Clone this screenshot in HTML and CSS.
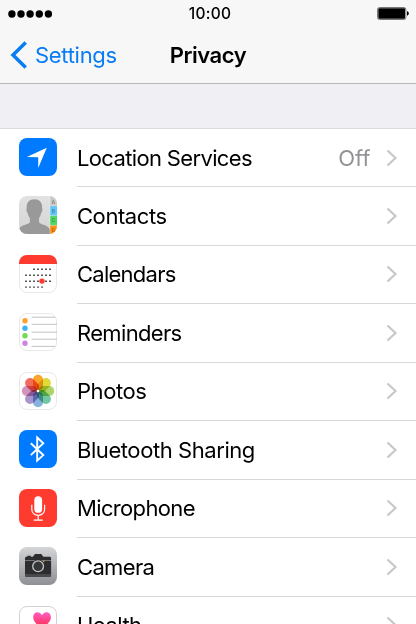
FILE: index.html
```html
<!DOCTYPE html>
<html lang="en">
<head>
  <meta charset="utf-8">
  <title>Privacy</title>
  <link rel="stylesheet" href="styles.css">
</head>
<body>
  <header class="header">
    <div class="status-bar">
      <svg class="signal" viewBox="0 0 44 8">
        <circle cx="3.9" cy="4" r="3.7"/>
        <circle cx="13" cy="4" r="3.7"/>
        <circle cx="22.1" cy="4" r="3.7"/>
        <circle cx="31.3" cy="4" r="3.7"/>
        <circle cx="40.4" cy="4" r="3.7"/>
      </svg>
      <span class="time">10:00</span>
      <svg class="battery" viewBox="0 0 32 13">
        <rect x=".5" y=".5" width="28.4" height="12" rx="2" fill="#fff" stroke="#777"/>
        <rect x="1.3" y="1.3" width="26.8" height="10.4" rx="1"/>
        <path d="M30 4.3c2.4.6 2.4 3.8 0 4.4z"/>
      </svg>
    </div>
    <nav class="nav-bar">
      <a class="back">
        <svg class="back-arrow" viewBox="0 0 18 28"><path d="M15.7 1.5 3 14l12.7 12.5"/></svg>
        <span>Settings</span>
      </a>
      <h1 class="title">Privacy</h1>
    </nav>
  </header>

  <main class="list">
    <div class="row">
      <svg class="icon" viewBox="0 0 38 38">
        <rect width="38" height="38" rx="8" fill="#007aff"/>
        <path d="M27.8 9.8 19.2 30v-10.8L7.800 19z" fill="#fff"/>
      </svg>
      <div class="cell">
        <span class="label location">Location Services</span>
        <span class="value">Off</span>
        <svg class="chevron" viewBox="0 0 12 18"><path d="m1.5 1.5 8 7.5-8 7.5"/></svg>
      </div>
    </div>

    <div class="row">
      <svg class="icon" viewBox="0 0 38 38">
        <defs>
          <clipPath id="round"><rect width="38" height="38" rx="8"/></clipPath>
          <linearGradient id="paper" x2="0" y2="1"><stop stop-color="#e2e2e2"/><stop offset="1" stop-color="#d4d4d4"/></linearGradient>
        </defs>
        <g clip-path="url(#round)">
          <rect width="38" height="38" fill="url(#paper)"/>
          <path d="M15.4 3.2c5 0 8 3.2 7.7 8.2 0 1 .4 1.5.2 3-.2 1.4-.8 1.9-1.2 2.500-.3 2.600-1.300 4-2.100 5.100v4.200c1.200 2.600 9.200 2.600 11 7.300V38H0v-5c1.800-4.300 9.800-4.500 10.900-6.800V22c-.9-1.100-1.900-2.600-2.200-5.100-.5-.6-1-1.200-1.200-2.500-.2-1.400.2-2 .2-3-.2-5 2.700-8.200 7.700-8.200z" fill="#999"/>
          <rect x="31" width="7" height="10" fill="#c9c9c3"/>
          <rect x="31" y="10" width="7" height="9.7" fill="#5fc6fa"/>
          <rect x="31" y="19.7" width="7" height="9.7" fill="#4dd765"/>
          <rect x="31" y="29.4" width="7" height="9" fill="#ff9212"/>
          <path d="M31 9.8h7M31 19.6h7M31 29.3h7M31 0v38" stroke="#fff" stroke-opacity=".5" stroke-width=".6"/>
          <g class="tab-letters">
            <text x="34.3" y="8">A</text>
            <text x="34.3" y="16.8">B</text>
            <text x="34.3" y="26.4">C</text>
            <text x="34.3" y="35.5">D</text>
          </g>
        </g>
      </svg>
      <div class="cell">
        <span class="label contacts">Contacts</span>
        <svg class="chevron" viewBox="0 0 12 18"><path d="m1.5 1.5 8 7.5-8 7.5"/></svg>
      </div>
    </div>

    <div class="row">
      <svg class="icon" viewBox="0 0 38 38">
        <rect x=".5" y=".5" width="37" height="37" rx="7.5" fill="#fff" stroke="#e8e8e8"/>
        <path d="M0 9V8a8 8 0 0 1 8-8h22a8 8 0 0 1 8 8v1z" fill="#ff3b30"/>
        <g stroke="#111" stroke-width="1.4" stroke-dasharray="1.4 2.6">
          <path d="M14.3 14.3H32"/>
          <path d="M6.3 20.300H32"/>
          <path d="M6.3 26.2H32"/>
          <path d="M6.3 32.1H24"/>
        </g>
        <circle cx="23" cy="26.1" r="2.7" fill="#ff3b30"/>
      </svg>
      <div class="cell">
        <span class="label calendars">Calendars</span>
        <svg class="chevron" viewBox="0 0 12 18"><path d="m1.5 1.5 8 7.5-8 7.5"/></svg>
      </div>
    </div>

    <div class="row">
      <svg class="icon" viewBox="0 0 38 38">
        <rect x=".5" y=".5" width="37" height="37" rx="7.5" fill="#fff" stroke="#e8e8e8"/>
        <path d="M12.7 4.2h23.5M12.7 11.3H38M12.7 19.2H38M12.7 26.2H38M12.7 33.4h23.5" stroke="#bcbcbc" stroke-width=".9"/>
        <circle cx="6" cy="7.7" r="2.7" fill="#ff9f2e"/>
        <circle cx="6" cy="15.2" r="2.7" fill="#3db2f2"/>
        <circle cx="6" cy="22.8" r="2.7" fill="#76d955"/>
        <circle cx="6" cy="30.2" r="2.7" fill="#ce85e2"/>
      </svg>
      <div class="cell">
        <span class="label reminders">Reminders</span>
        <svg class="chevron" viewBox="0 0 12 18"><path d="m1.5 1.5 8 7.5-8 7.5"/></svg>
      </div>
    </div>

    <div class="row">
      <svg class="icon" viewBox="0 0 38 38">
        <rect x=".5" y=".5" width="37" height="37" rx="7.5" fill="#fff" stroke="#e8e8e8"/>
        <g class="petals">
          <rect x="14" y="2.8" width="10" height="15.600" rx="5" fill="#fba62b"/>
          <rect x="14" y="2.8" width="10" height="15.600" rx="5" fill="#e0d93a" transform="rotate(45 19 19)"/>
          <rect x="14" y="2.8" width="10" height="15.600" rx="5" fill="#add36b" transform="rotate(90 19 19)"/>
          <rect x="14" y="2.8" width="10" height="15.600" rx="5" fill="#74c6a0" transform="rotate(135 19 19)"/>
          <rect x="14" y="2.8" width="10" height="15.600" rx="5" fill="#86b2dd" transform="rotate(180 19 19)"/>
          <rect x="14" y="2.8" width="10" height="15.600" rx="5" fill="#a995cc" transform="rotate(225 19 19)"/>
          <rect x="14" y="2.8" width="10" height="15.600" rx="5" fill="#d394bc" transform="rotate(270 19 19)"/>
          <rect x="14" y="2.8" width="10" height="15.600" rx="5" fill="#f26c5c" transform="rotate(315 19 19)"/>
        </g>
        <circle cx="19" cy="19" r="1.3" fill="#fff"/>
      </svg>
      <div class="cell">
        <span class="label photos">Photos</span>
        <svg class="chevron" viewBox="0 0 12 18"><path d="m1.5 1.5 8 7.5-8 7.5"/></svg>
      </div>
    </div>

    <div class="row">
      <svg class="icon" viewBox="0 0 38 38">
        <rect width="38" height="38" rx="8" fill="#007aff"/>
        <path d="m11.8 13.3 12.5 11.8-6.100 5.600V7.500l6.100 5.700-12.500 11.900" fill="none" stroke="#fff" stroke-width="1.9"/>
      </svg>
      <div class="cell">
        <span class="label bluetooth">Bluetooth Sharing</span>
        <svg class="chevron" viewBox="0 0 12 18"><path d="m1.5 1.5 8 7.5-8 7.5"/></svg>
      </div>
    </div>

    <div class="row">
      <svg class="icon" viewBox="0 0 38 38">
        <rect width="38" height="38" rx="8" fill="#ff3b30"/>
        <rect x="15.3" y="7.3" width="7.8" height="16.5" rx="3.9" fill="#fff"/>
        <path d="M12.8 15.8v4.500c0 8 12.800 8 12.800 0v-4.500M19.200 26.500V31M14.700 31.200h9" fill="none" stroke="#fff" stroke-width="1.2"/>
      </svg>
      <div class="cell">
        <span class="label microphone">Microphone</span>
        <svg class="chevron" viewBox="0 0 12 18"><path d="m1.5 1.5 8 7.5-8 7.5"/></svg>
      </div>
    </div>

    <div class="row">
      <svg class="icon" viewBox="0 0 38 38">
        <defs>
          <linearGradient id="steel" x2="0" y2="1"><stop stop-color="#d4d5d7"/><stop offset="1" stop-color="#8f9095"/></linearGradient>
        </defs>
        <rect width="38" height="38" rx="8" fill="url(#steel)"/>
        <path d="M8.300 8.700h3.500v1h2.100l2-2.700h6.400l2 2.700h6.100c1.100 0 1.700.6 1.700 1.700v2H6v-2c0-1.100.6-1.700 1.700-1.700h.6zM6 14h26.100v13.700H6z" fill="#2d2d2f"/>
        <path d="M6 28.200h26.100v.5c0 .6-.5 1-1 1H7c-.6 0-1-.4-1-1z" fill="#2d2d2f"/>
        <circle cx="19.1" cy="19.3" r="6.8" fill="#2d2d2f"/>
        <circle cx="19.1" cy="19.3" r="5.4" fill="#353638" stroke="#c4c5c7" stroke-width="1.3"/>
        <circle cx="24.7" cy="14.3" r=".7" fill="#ffc340"/>
      </svg>
      <div class="cell">
        <span class="label camera">Camera</span>
        <svg class="chevron" viewBox="0 0 12 18"><path d="m1.5 1.5 8 7.5-8 7.5"/></svg>
      </div>
    </div>

    <div class="row">
      <svg class="icon" viewBox="0 0 38 38">
        <defs>
          <linearGradient id="pink" x2="0" y2="1"><stop stop-color="#ff5ec0"/><stop offset="1" stop-color="#ff2747"/></linearGradient>
        </defs>
        <rect x=".5" y=".5" width="37" height="37" rx="7.5" fill="#fff" stroke="#d2d2d2"/>
        <path d="M23 9.300C20.300 4.200 14.200 6 14.200 11.300c0 4.300 3.800 7.300 8.800 11.700 5-4.400 8.900-7.400 8.900-11.700C31.900 6 25.700 4.200 23 9.300z" fill="url(#pink)"/>
      </svg>
      <div class="cell">
        <span class="label health">Health</span>
        <svg class="chevron" viewBox="0 0 12 18"><path d="m1.5 1.5 8 7.5-8 7.5"/></svg>
      </div>
    </div>
  </main>
</body>
</html>
```
FILE: styles.css
```css
* {
  box-sizing: border-box;
}

html {
  overflow: hidden;
}

body {
  display: flex;
  flex-direction: column;
  margin: 0;
  height: 624px;
  overflow: hidden;
  background-color: #efeff4;
  font-family: Inter, "Liberation Sans", sans-serif;
  font-size: 22px;
  color: #000;
}

.header {
  flex: none;
  height: 84px;
  background-color: #f7f7f7;
  border-bottom: 1px solid #b8b8bb;
}

.status-bar, .nav-bar {
  display: grid;
  grid-template-columns: 1fr auto 1fr;
  align-items: center;
}

.status-bar {
  height: 27px;
  padding: 0 7px 0 8px;
}

.signal {
  width: 44px;
  height: 8px;
}

.time {
  padding-left: 3px;
  font-size: 15.5px;
  font-weight: 500;
  letter-spacing: 0.3px;
}

.battery {
  width: 32px;
  height: 13px;
  justify-self: end;
}

.nav-bar {
  height: 55px;
  padding-left: 10px;
  padding-right: 10px;
}

.back {
  display: flex;
  align-items: center;
  gap: 7px;
  color: #087cf5;
  letter-spacing: -0.3px;
}

.back-arrow {
  width: 18px;
  height: 28px;
  fill: none;
  stroke: #087cf5;
  stroke-width: 3.5;
}

.title {
  margin: 0;
  font-size: 22px;
  font-weight: 600;
  letter-spacing: -0.45px;
}

.list {
  flex: 1;
  min-height: 0;
  overflow: hidden;
  margin-top: 44px;
  background-color: #fff;
  border-top: 1px solid #dcdce0;
}

.row {
  display: flex;
  height: 58.5px;
  padding-left: 19.3px;
  gap: 19.7px;
}

.row:first-child {
  height: 58px;
}

.row:first-child .icon {
  margin-top: 8.7px;
}

.icon {
  width: 38px;
  height: 38px;
  margin-top: 9px;
  flex: none;
}

.cell {
  flex: 1;
  display: flex;
  align-items: center;
  padding-right: 18.5px;
  border-bottom: 1px solid #d8d8db;
}

.label {
  flex: 1;
  white-space: nowrap;
  letter-spacing: -0.65px;
}

.contacts, .bluetooth, .photos {
  letter-spacing: -0.43px;
}

.calendars {
  letter-spacing: -0.75px;
}

.health {
  letter-spacing: -0.5px;
}

.value {
  margin-right: 15px;
  color: #929296;
}

.chevron {
  width: 12px;
  height: 18px;
  fill: none;
  stroke: #c7c7cc;
  stroke-width: 2.2;
}

.tab-letters {
  font-size: 5px;
  font-weight: 600;
  text-anchor: middle;
  fill: #000;
  fill-opacity: 0.35;
}

.petals {
  isolation: isolate;
}

.petals rect {
  mix-blend-mode: multiply;
}
```
